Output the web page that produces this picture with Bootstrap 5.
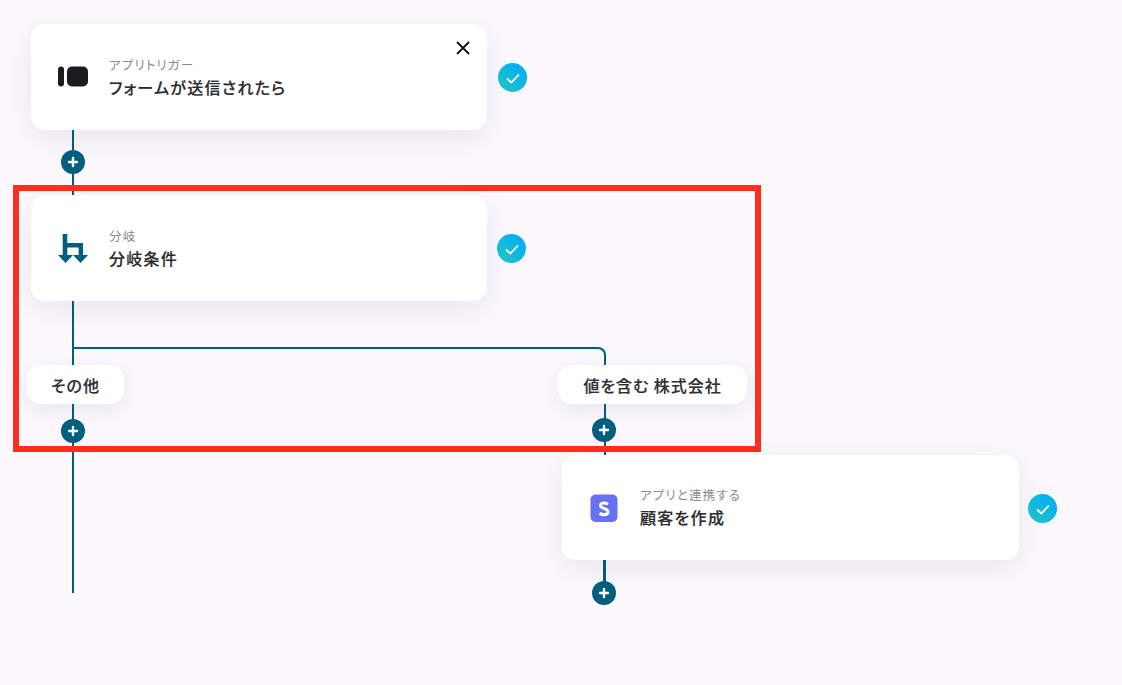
<!DOCTYPE html>
<html lang="ja">
<head>
  <meta charset="UTF-8">
  <meta name="viewport" content="width=device-width, initial-scale=1.0">
  <title>フロー</title>
  <link href="https://cdn.jsdelivr.net/npm/bootstrap@5.3.0/dist/css/bootstrap.min.css" rel="stylesheet">
  <style>
    html, body { height: 100%; }
    body {
      background-color: #fbf9fd;
      font-family: "Noto Sans CJK JP", "Noto Sans", sans-serif;
      font-feature-settings: "palt";
      overflow: hidden;
    }
    .flow-canvas { width: 1122px; height: 685px; overflow: hidden; }
    .flow-line { position: absolute; background-color: #005f7f; }
    .flow-corner {
      position: absolute; left: 74px; top: 347px; width: 532px; height: 20px;
      border-top: 2px solid #005f7f; border-right: 2px solid #005f7f;
      border-top-right-radius: 8px;
    }
    .step-card {
      position: absolute; width: 456px; height: 106px;
      border: 0; border-radius: 14px;
      box-shadow: 0 8px 30px rgba(40, 30, 70, .085);
    }
    .step-icon { width: 32px; height: 32px; margin-left: 26px; margin-right: 20px; flex-shrink: 0; }
    .step-sub { font-size: 12.500px; line-height: 16px; color: #8a8a8e; letter-spacing: .09em; }
    .step-title { font-size: 16px; line-height: 22px; font-weight: 500; color: #2b2b2e; margin-top: 3px; letter-spacing: .08em; -webkit-text-stroke: .2px #2b2b2e; }
    .step-close { position: absolute; right: 16px; top: 16px; width: 16px; height: 16px; }
    .branch-pill {
      position: absolute; top: 365px; height: 39px;
      background: #fff; border-radius: 14px;
      box-shadow: 0 6px 22px rgba(40, 30, 70, .085);
      font-size: 16px; font-weight: 500; color: #2f2f33; letter-spacing: .06em; -webkit-text-stroke: .2px #2f2f33;
    }
    .add-dot {
      position: absolute; width: 24px; height: 24px; border-radius: 50%;
      background-color: #005f7f;
    }
    .ok-dot {
      position: absolute; width: 29px; height: 29px; border-radius: 50%;
      background: linear-gradient(45deg, #22c7bf, #00a8ff);
    }
    .red-frame {
      position: absolute; left: 13px; top: 185px; width: 748px; height: 267px;
      border: 6px solid #ff2d1e; pointer-events: none;
    }
  </style>
</head>
<body>
  <div class="flow-canvas position-relative">

    <!-- 線 -->
    <div class="flow-line" style="left:72px;top:129px;width:2px;height:66px"></div>
    <div class="flow-line" style="left:72px;top:301px;width:2px;height:292px"></div>
    <div class="flow-corner"></div>
    <div class="flow-line" style="left:604px;top:404px;width:2px;height:52px"></div>
    <div class="flow-line" style="left:603px;top:560px;width:3px;height:30px"></div>

    <!-- トリガー -->
    <div class="card step-card flex-row align-items-center" style="left:31px;top:24px">
      <svg class="step-icon" viewBox="0 0 32 32">
        <rect x="1" y="5.500" width="6" height="20" rx="3" fill="#1d1b20"/>
        <rect x="10" y="5.500" width="21" height="20" rx="5" fill="#1d1b20"/>
      </svg>
      <div>
        <div class="step-sub">アプリトリガー</div>
        <div class="step-title">フォームが送信されたら</div>
      </div>
      <svg class="step-close" viewBox="0 0 16 16"><path d="M2 2 14 14M14 2 2 14" stroke="#111" stroke-width="1.800" fill="none"/></svg>
    </div>

    <!-- 分岐 -->
    <div class="card step-card flex-row align-items-center" style="left:31px;top:195px">
      <svg class="step-icon" viewBox="0 0 32 32">
        <path d="M5.700 2h4.600v9H26v13h-4.400v-8.500H10.300V24H5.700z" fill="#005f7f"/>
        <path d="M1 23h15l-7.500 8zM16 23h15l-7.500 8z" fill="#005f7f"/>
      </svg>
      <div>
        <div class="step-sub">分岐</div>
        <div class="step-title">分岐条件</div>
      </div>
    </div>

    <!-- Stripe -->
    <div class="card step-card flex-row align-items-center" style="left:562px;top:455px;height:105px;width:457px">
      <svg class="step-icon" viewBox="0 0 32 32">
        <rect x="2.500" y="2.500" width="27" height="27.500" rx="5" fill="#6772f0"/>
        <path d="M20 12.200c-1.300-.8-2.800-1.200-4.200-1.200-2 0-3.300.9-3.300 2.400 0 3.500 7.500 2.500 7.500 6.400 0 1.700-1.500 2.900-3.900 2.900-1.600 0-3.200-.5-4.600-1.300" fill="none" stroke="#fff" stroke-width="3"/>
      </svg>
      <div>
        <div class="step-sub">アプリと連携する</div>
        <div class="step-title">顧客を作成</div>
      </div>
    </div>

    <!-- 分岐ラベル -->
    <div class="branch-pill d-flex align-items-center justify-content-center" style="left:27px;width:97px">その他</div>
    <div class="branch-pill d-flex align-items-center justify-content-center" style="left:558px;width:189px">値を含む 株式会社</div>

    <!-- 追加ボタン -->
    <div class="add-dot d-flex align-items-center justify-content-center" style="left:61px;top:150px"><svg width="12" height="12" viewBox="0 0 12 12"><path d="M6 2v8M2 6h8" stroke="#fff" stroke-width="2.400" stroke-linecap="round"/></svg></div>
    <div class="add-dot d-flex align-items-center justify-content-center" style="left:61px;top:419px"><svg width="12" height="12" viewBox="0 0 12 12"><path d="M6 2v8M2 6h8" stroke="#fff" stroke-width="2.400" stroke-linecap="round"/></svg></div>
    <div class="add-dot d-flex align-items-center justify-content-center" style="left:592px;top:418px"><svg width="12" height="12" viewBox="0 0 12 12"><path d="M6 2v8M2 6h8" stroke="#fff" stroke-width="2.400" stroke-linecap="round"/></svg></div>
    <div class="add-dot d-flex align-items-center justify-content-center" style="left:592px;top:581px"><svg width="12" height="12" viewBox="0 0 12 12"><path d="M6 2v8M2 6h8" stroke="#fff" stroke-width="2.400" stroke-linecap="round"/></svg></div>

    <!-- チェック -->
    <div class="ok-dot d-flex align-items-center justify-content-center" style="left:498px;top:63px"><svg width="16" height="16" viewBox="0 0 16 16"><path d="M2 8.500 6.300 12.500 14 4.500" stroke="#fff" stroke-width="1.800" fill="none"/></svg></div>
    <div class="ok-dot d-flex align-items-center justify-content-center" style="left:497px;top:234px"><svg width="16" height="16" viewBox="0 0 16 16"><path d="M2 8.500 6.300 12.500 14 4.500" stroke="#fff" stroke-width="1.800" fill="none"/></svg></div>
    <div class="ok-dot d-flex align-items-center justify-content-center" style="left:1028px;top:494px"><svg width="16" height="16" viewBox="0 0 16 16"><path d="M2 8.500 6.300 12.500 14 4.500" stroke="#fff" stroke-width="1.800" fill="none"/></svg></div>

    <div class="red-frame"></div>
  </div>
  <script src="https://cdn.jsdelivr.net/npm/bootstrap@5.3.0/dist/js/bootstrap.bundle.min.js"></script>
</body>
</html>
